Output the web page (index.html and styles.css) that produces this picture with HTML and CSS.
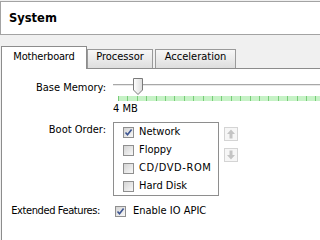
FILE: index.html
```html
<!DOCTYPE html>
<html>
<head>
<meta charset="utf-8">
<link rel="stylesheet" href="styles.css">
</head>
<body>
<div class="header"><span class="title">System</span></div>
<div class="tabs">
  <div class="tab active">Motherboard</div>
  <div class="tab proc">Processor</div>
  <div class="tab accel">Acceleration</div>
</div>
<div class="panel">
  <div class="row mem">
    <div class="label">Base Memory:</div>
    <div class="slider">
      <div class="track-area">
        <div class="track"></div>
        <svg class="thumb" width="10" height="17" viewBox="0 0 10 17">
          <defs>
            <linearGradient id="tg" x1="0" y1="0" x2="1" y2="0">
              <stop offset="0" stop-color="#ffffff"/>
              <stop offset="1" stop-color="#dcdcdc"/>
            </linearGradient>
          </defs>
          <path d="M0.5,0.5 H9.5 V12 L5,16.5 L0.5,12 Z" fill="url(#tg)" stroke="#7a7a7a"/>
        </svg>
      </div>
      <div class="ticks"></div>
      <div class="value">4 MB</div>
    </div>
  </div>
  <div class="row boot">
    <div class="label">Boot Order:</div>
    <div class="list">
      <div class="item"><span class="cb checked"><svg width="9" height="9" viewBox="0 0 9 9"><path d="M1.5,4.5 L3.5,6.8 L7.6,1.6" fill="none" stroke="#3d5592" stroke-width="1.6"/></svg></span>Network</div>
      <div class="item"><span class="cb"></span>Floppy</div>
      <div class="item"><span class="cb"></span><span class="wide">CD/DVD-ROM</span></div>
      <div class="item"><span class="cb"></span>Hard Disk</div>
    </div>
    <div class="arrows">
      <span class="abtn"><svg width="12" height="12" viewBox="0 0 12 12"><path d="M6,1.5 L10,6 H7.5 V10.5 H4.5 V6 H2 Z" fill="#c4c4c4"/></svg></span>
      <span class="abtn"><svg width="12" height="12" viewBox="0 0 12 12"><path d="M6,10.5 L10,6 H7.5 V1.5 H4.5 V6 H2 Z" fill="#c4c4c4"/></svg></span>
    </div>
  </div>
  <div class="row ext">
    <div class="label">Extended Features:</div>
    <div class="check"><span class="cb checked"><svg width="9" height="9" viewBox="0 0 9 9"><path d="M1.5,4.5 L3.5,6.8 L7.6,1.6" fill="none" stroke="#3d5592" stroke-width="1.6"/></svg></span>Enable IO APIC</div>
  </div>
</div>
</body>
</html>
```
FILE: styles.css
```css
html, body {
  margin: 0;
  padding: 0;
  height: 100%;
}
body {
  background: #f0f0f0;
  font-family: "DejaVu Sans", sans-serif;
  font-stretch: condensed;
  font-size: 11px;
  line-height: 14px;
  color: #000;
  overflow: hidden;
  padding-top: 1px;
  box-sizing: border-box;
  display: flex;
  flex-direction: column;
}
.header {
  flex: none;
  height: 34px;
  box-sizing: border-box;
  background: #fff;
  border: 1px solid #a3a3a3;
  border-right: none;
  display: flex;
  align-items: center;
  padding-left: 8px;
}
.title {
  font-weight: bold;
  font-stretch: normal;
  font-size: 11.5px;
}
.tabs {
  flex: none;
  display: flex;
  align-items: flex-end;
  height: 23px;
  margin: 11px 0 -1px 1px;
  position: relative;
  z-index: 1;
}
.tab {
  box-sizing: border-box;
  border: 1px solid #9a9a9a;
  border-bottom: none;
  display: flex;
  justify-content: center;
  background: linear-gradient(#f7f7f7, #dedede);
  height: 19px;
  margin-bottom: 1px;
  padding-top: 0;
}
.tab.active {
  width: 86px;
  height: 23px;
  margin-bottom: 0;
  padding-top: 3px;
  background: #fff;
  border-color: #8c8c8c;
  letter-spacing: -0.2px;
}
.proc { width: 66px; }
.accel { width: 81px; margin-left: 2px; }
.panel {
  flex: 1;
  background: #fff;
  border-top: 1px solid #8c8c8c;
  border-left: 1px solid #8c8c8c;
  margin-left: 1px;
}
.row {
  display: flex;
  align-items: flex-start;
}
.label {
  width: 111px;
  flex: none;
  box-sizing: border-box;
  text-align: right;
  padding-right: 7px;
  white-space: nowrap;
}
.mem { margin-top: 8px; }
.mem .label { padding-top: 4px; }
.slider {
  flex: 1;
}
.track-area {
  position: relative;
  height: 18px;
}
.track {
  position: absolute;
  left: 0;
  right: 0;
  top: 7px;
  height: 1px;
  background: #a8a8a8;
  border-bottom: 1px solid #e8e8e8;
}
.thumb {
  position: absolute;
  left: 20px;
  top: 1px;
}
.ticks {
  margin: 1px 0 0 5px;
  height: 5px;
  background: repeating-linear-gradient(90deg, #78cc78 0, #78cc78 1px, #c6f2c6 1px, #c6f2c6 9.4px);
}
.value {
  margin-top: 1px;
}
.boot { margin-top: 6px; }
.boot .label { padding-top: 1px; }
.list {
  width: 106px;
  box-sizing: border-box;
  border: 1px solid #8e8e8e;
  background: #fff;
}
.item {
  height: 18px;
  display: flex;
  align-items: center;
  padding-left: 9px;
  white-space: nowrap;
}
.wide { letter-spacing: 0.6px; }
.cb {
  width: 11px;
  height: 11px;
  box-sizing: border-box;
  border: 1px solid #8f8f8f;
  background: linear-gradient(135deg, #d4d4d4, #f8f8f8);
  display: inline-flex;
  align-items: center;
  justify-content: center;
  margin-right: 5px;
  flex: none;
}
.arrows {
  display: flex;
  flex-direction: column;
  margin-left: 5px;
  padding-top: 5px;
  gap: 7px;
}
.abtn {
  width: 14px;
  height: 14px;
  box-sizing: border-box;
  border: 1px solid #d4d4d4;
  background: #f6f6f6;
  display: flex;
  align-items: center;
  justify-content: center;
}
.ext { margin-top: 8px; }
.ext .label { padding-right: 13px; letter-spacing: -0.4px; }
.check {
  display: flex;
  align-items: center;
  margin-left: 2px;
  white-space: nowrap;
}
.check .cb { margin-right: 7px; }
```
